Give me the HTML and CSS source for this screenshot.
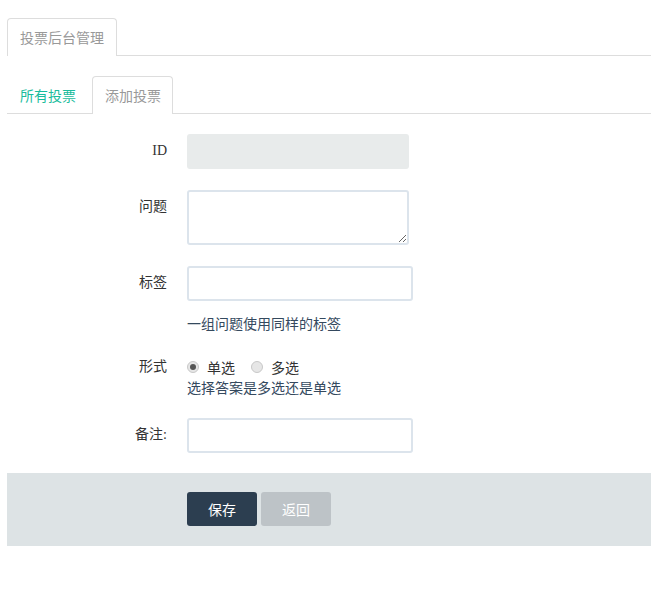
FILE: index.html
```html
<!DOCTYPE html>
<html lang="zh">
<head>
<meta charset="utf-8">
<title>投票后台管理</title>
<link rel="stylesheet" href="styles.css">
</head>
<body>
<div class="page">
  <ul class="tabs tabs-top">
    <li class="tab active">投票后台管理</li>
  </ul>
  <ul class="tabs tabs-sub">
    <li class="tab link">所有投票</li>
    <li class="tab active">添加投票</li>
  </ul>
  <form class="form">
    <div class="row">
      <label class="label">ID</label>
      <div class="field"><input class="input disabled" type="text" disabled></div>
    </div>
    <div class="row">
      <label class="label">问题</label>
      <div class="field"><textarea class="input textarea"></textarea></div>
    </div>
    <div class="row row-help">
      <label class="label">标签</label>
      <div class="field">
        <input class="input wide" type="text">
        <p class="help help-spaced">一组问题使用同样的标签</p>
      </div>
    </div>
    <div class="row row-radio">
      <label class="label label-radio">形式</label>
      <div class="field">
        <div class="radios">
          <label class="radio"><span class="dot checked"></span>单选</label>
          <label class="radio"><span class="dot"></span>多选</label>
        </div>
        <p class="help">选择答案是多选还是单选</p>
      </div>
    </div>
    <div class="row">
      <label class="label">备注:</label>
      <div class="field"><input class="input wide" type="text"></div>
    </div>
    <div class="actions">
      <button type="button" class="btn btn-primary">保存</button>
      <button type="button" class="btn btn-default">返回</button>
    </div>
  </form>
</div>
</body>
</html>
```
FILE: styles.css
```css
html, body {
  margin: 0;
  padding: 0;
  background: #fff;
}
body {
  font-family: "Noto Sans CJK SC", "Noto Sans", sans-serif;
  font-size: 14px;
  color: #34495e;
}
.page {
  padding: 18px 0 0 7px;
}
.tabs {
  list-style: none;
  margin: 0;
  padding: 0;
  display: flex;
  border-bottom: 1px solid #dddddd;
}
.tabs-sub {
  margin-top: 20px;
}
.tab {
  height: 36px;
  line-height: 36px;
  padding: 0 12px;
  font-size: 14px;
  color: #999;
  border: 1px solid transparent;
  border-bottom: none;
  border-radius: 4px 4px 0 0;
  margin-bottom: -1px;
  background: #fff;
}
.tab.active {
  border-color: #dddddd;
  height: 37px;
}
.tab.link {
  color: #1abc9c;
  margin-right: 3px;
}
.tabs-sub .tab.active {
  padding: 0 11px 0 12px;
}
.form {
  padding-top: 20px;
}
.row {
  display: flex;
  gap: 20px;
  margin-bottom: 21px;
}
.label {
  width: 160px;
  flex: none;
  text-align: right;
  line-height: 20px;
  padding-top: 7px;
  font-family: "Liberation Serif", "Noto Sans CJK SC", serif;
  font-size: 14px;
  color: #333;
}
.label-radio {
  padding-top: 0;
}
.field {
  display: flex;
  flex-direction: column;
}
.input {
  box-sizing: border-box;
  width: 222px;
  height: 35px;
  border: 2px solid #dce4ec;
  border-radius: 3px;
  background: #fff;
  margin: 0;
  font: inherit;
}
.input.wide {
  width: 226px;
}
.input.disabled {
  background: #e8ebeb;
  border-color: #e8ebeb;
}
.textarea {
  height: 55px;
  resize: vertical;
}
.row-help {
  margin-bottom: 24px;
}
.help {
  margin: 0;
  line-height: 20px;
  font-size: 14px;
  color: #34495e;
}
.help-spaced {
  margin-top: 12px;
}
.radios {
  display: flex;
  gap: 16px;
  line-height: 20px;
}
.radio {
  display: flex;
  align-items: center;
  gap: 8px;
  color: #333;
}
.dot {
  box-sizing: border-box;
  width: 12px;
  height: 12px;
  border-radius: 50%;
  border: 1px solid #c8c8c8;
  background: #e6e6e6;
  position: relative;
}
.dot.checked::after {
  content: "";
  position: absolute;
  left: 2px;
  top: 2px;
  width: 6px;
  height: 6px;
  border-radius: 50%;
  background: #555;
}
.actions {
  background: #dde3e5;
  padding: 19px 0 20px 180px;
  margin-top: -1px;
  display: flex;
  gap: 4px;
}
.btn {
  width: 70px;
  height: 34px;
  border: none;
  border-radius: 3px;
  color: #fff;
  font: inherit;
  font-size: 14px;
  padding: 0;
}
.btn-primary {
  background: #2c3e50;
}
.btn-default {
  background: #bdc3c7;
}
```
